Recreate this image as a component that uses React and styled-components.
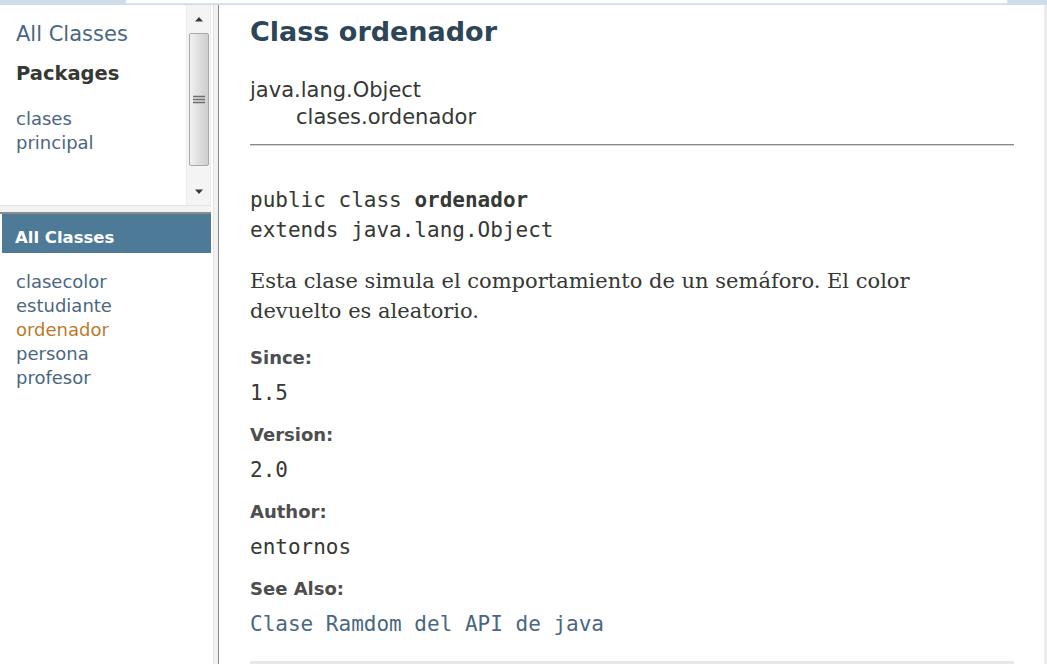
import React from 'react';
import styled, { createGlobalStyle } from "styled-components";

const GlobalStyle = createGlobalStyle`
    html, body {
        margin: 0;
        padding: 0;
        background: #fff;
        overflow: hidden;
    }
`

const Page = styled.div`
    width: 1047px;
    height: 664px;
    display: flex;
    flex-direction: column;
    font-family: "DejaVu Sans", Arial, sans-serif;
    color: #353833;
`

const TabStrip = styled.div`
    height: 5px;
    flex: none;
    display: flex;
    background: #cfdcec;
`

const TabGap = styled.div`
    width: ${({w}) => w}px;
    flex: none;
`

const ActiveTab = styled.div`
    width: 881px;
    height: 3px;
    background: #fff;
    border-bottom: 1px solid #dde3ea;
    border-right: 1px solid #dde3ea;
    border-left: 1px solid #dde3ea;
`

const Frames = styled.div`
    flex: 1;
    display: flex;
    min-height: 0;
`

const LeftColumn = styled.div`
    width: 211px;
    flex: none;
    display: flex;
    flex-direction: column;
`

const UpperFrame = styled.div`
    height: 200px;
    flex: none;
    display: flex;
`

const IndexHeader = styled.div`
    flex: 1;
    padding: 16px 0 0 16px;
`

const AllLink = styled.a`
    display: block;
    font-size: 21px;
    line-height: 26px;
    color: #4a6782;
    text-decoration: none;
`

const IndexTitle = styled.h2`
    margin: 15px 0 21px;
    font-size: 19.5px;
    line-height: 24px;
    font-weight: bold;
    color: #353833;
`

const LinkList = styled.ul`
    list-style: none;
    margin: 0;
    padding: 0;
`

const LinkItem = styled.li`
    font-size: 18px;
    line-height: 24px;
    color: ${({active}) => (active ? '#bb7a2a' : '#4a6782')};
`

const Scrollbar = styled.div`
    width: 23px;
    flex: none;
    display: flex;
    flex-direction: column;
    align-items: center;
    background: #f4f4f4;
    border-left: 1px solid #ececec;
    border-right: 1px solid #ececec;
`

const ScrollButton = styled.div`
    height: ${({h}) => h}px;
    width: 100%;
    display: flex;
    align-items: center;
    justify-content: center;
    flex: none;
`

const Thumb = styled.div`
    width: 20px;
    height: 133px;
    flex: none;
    box-sizing: border-box;
    border: 1px solid #a9a9a9;
    border-radius: 2px;
    background: linear-gradient(to right, #f2f2f2, #dcdcdc 55%, #cfcfcf);
    display: flex;
    align-items: center;
    justify-content: center;
`

const Track = styled.div`
    flex: 1;
`

const HorizontalSplit = styled.div`
    height: 9px;
    flex: none;
    box-sizing: border-box;
    background: #f3f3f3;
    border-top: 1px solid #e4e4e4;
    border-bottom: 2px solid #8c8c8c;
    margin-right: -2px;
`

const LowerFrame = styled.div`
    flex: 1;
    padding-left: 2px;
`

const Bar = styled.h1`
    margin: 0;
    height: 39px;
    box-sizing: border-box;
    display: flex;
    align-items: center;
    padding: 7px 0 0 13px;
    background: #4d7a97;
    color: #fff;
    font-size: 16.5px;
    font-weight: bold;
`

const ClassList = styled(LinkList)`
    padding: 17px 0 0 14px;
`

const VerticalSplit = styled.div`
    width: 8px;
    flex: none;
    box-sizing: border-box;
    border-left: 1px solid #fff;
    background: linear-gradient(to right, #fff 0 1px, #e2e2e2 1px 2px, #f2f2f2 2px 6px, #8c8c8c 6px 8px);
`

const Content = styled.main`
    flex: 1;
    padding: 0 30px 0 31px;
`

const Title = styled.h2`
    margin: 11px 0 0;
    font-size: 27px;
    line-height: 32px;
    font-weight: bold;
    color: #2c4557;
`

const Inheritance = styled.div`
    margin-top: 29px;
    font-size: 21px;
    line-height: 27px;
`

const Indented = styled.div`
    padding-left: 46px;
`

const Rule = styled.hr`
    margin: 13px 0 0;
    border: none;
    height: 1px;
    background: #888;
    box-shadow: 0 1px 0 #d6d6d6;
`

const Signature = styled.pre`
    margin: 40px 0 0;
    font-family: "DejaVu Sans Mono", "Liberation Mono", monospace;
    font-size: 21px;
    line-height: 30px;
    color: #353833;
`

const Block = styled.div`
    margin-top: 21px;
    max-width: 700px;
    font-family: "DejaVu Serif", Georgia, serif;
    font-size: 21px;
    line-height: 30px;
`

const Details = styled.dl`
    margin: 20px 0 0;
    padding-bottom: 23px;
    border-bottom: 3px solid #e8e8e8;
`

const Term = styled.dt`
    margin-top: ${({first}) => (first ? '0' : '16px')};
    font-size: 18px;
    line-height: 24px;
    font-weight: bold;
    color: #4e4e4e;
`

const Value = styled.dd`
    margin: 10px 0 0;
    font-family: "DejaVu Sans Mono", "Liberation Mono", monospace;
    font-size: 21px;
    line-height: 27px;
    color: ${({link}) => (link ? '#4a6782' : '#353833')};
`

const EdgeBar = styled.div`
    width: 3px;
    flex: none;
    background: #ebebeb;
`

const Arrow = ({up}) => (
    <svg width="10" height="6" viewBox="0 0 10 6">
        <path d={up ? "M1 5.5 L5 1 L9 5.5 Z" : "M1 0.5 L9 0.5 L5 5 Z"} fill="#3a3a3a" />
    </svg>
)

const Grip = () => (
    <svg width="12" height="10" viewBox="0 0 12 10">
        <path d="M0 1.5 H12 M0 4.5 H12 M0 7.5 H12" stroke="#6e6e6e" strokeWidth="1.4" />
    </svg>
)

const App = () => {
    const classes = ['clasecolor', 'estudiante', 'ordenador', 'persona', 'profesor']
    return (
        <>
        <GlobalStyle />
        <Page>
            <TabStrip>
                <TabGap w={125} />
                <ActiveTab />
            </TabStrip>
            <Frames>
                <LeftColumn>
                    <UpperFrame>
                        <IndexHeader>
                            <AllLink>All Classes</AllLink>
                            <IndexTitle>Packages</IndexTitle>
                            <LinkList>
                                <LinkItem>clases</LinkItem>
                                <LinkItem>principal</LinkItem>
                            </LinkList>
                        </IndexHeader>
                        <Scrollbar>
                            <ScrollButton h={28}><Arrow up /></ScrollButton>
                            <Thumb><Grip /></Thumb>
                            <Track />
                            <ScrollButton h={26}><Arrow /></ScrollButton>
                        </Scrollbar>
                    </UpperFrame>
                    <HorizontalSplit />
                    <LowerFrame>
                        <Bar>All Classes</Bar>
                        <ClassList>
                            {classes.map(name => (
                                <LinkItem key={name} active={name === 'ordenador'}>{name}</LinkItem>
                            ))}
                        </ClassList>
                    </LowerFrame>
                </LeftColumn>
                <VerticalSplit />
                <Content>
                    <Title>Class ordenador</Title>
                    <Inheritance>
                        <div>java.lang.Object</div>
                        <Indented>clases.ordenador</Indented>
                    </Inheritance>
                    <Rule />
                    <Signature>public class <b>ordenador</b>{'\n'}extends java.lang.Object</Signature>
                    <Block>Esta clase simula el comportamiento de un semáforo. El color devuelto es aleatorio.</Block>
                    <Details>
                        <Term first>Since:</Term>
                        <Value>1.5</Value>
                        <Term>Version:</Term>
                        <Value>2.0</Value>
                        <Term>Author:</Term>
                        <Value>entornos</Value>
                        <Term>See Also:</Term>
                        <Value link>Clase Ramdom del API de java</Value>
                    </Details>
                </Content>
                <EdgeBar />
            </Frames>
        </Page>
        </>
    )
}

export default App
